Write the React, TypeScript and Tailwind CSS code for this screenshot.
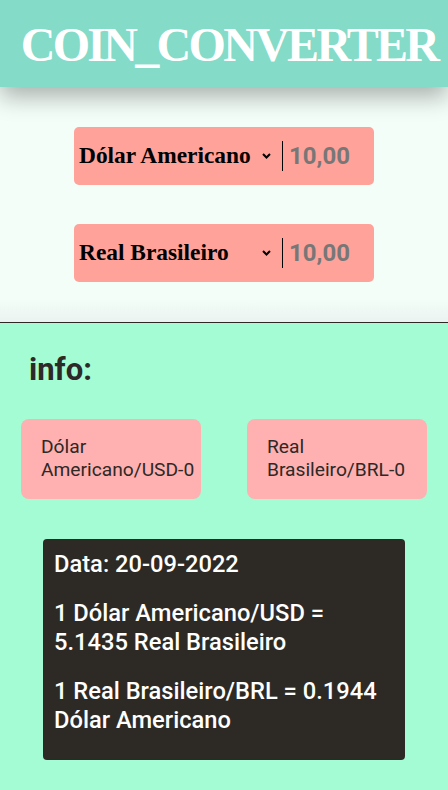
import { useState } from 'react';

type Coin = { name: string; code: string };

const coins: Coin[] = [
  { name: 'Dólar Americano', code: 'USD' },
  { name: 'Real Brasileiro', code: 'BRL' },
];

function Converter({ coin, value }: { coin: Coin; value: string }) {
  return (
    <div className="flex h-[58px] w-[300px] items-center rounded-[5px] bg-[#ffa29a] pl-[5px]">
      <div className="flex w-[198px] items-center justify-between font-['Liberation_Serif',serif] text-[23.4px] font-bold text-black">
        <span>{coin.name}</span>
        <svg width="9" height="6" viewBox="0 0 9 6" className="mr-[6px]">
          <polyline points="1,1 4.5,4.5 8,1" fill="none" stroke="black" strokeWidth="2" />
        </svg>
      </div>
      <div className="ml-[5px] h-[30px] border-l border-black" />
      <span className="ml-[6px] font-['Roboto',sans-serif] text-[24px] font-bold text-[#777777]">{value}</span>
    </div>
  );
}

export default function App() {
  const [value] = useState('10,00');

  return (
    <div className="min-h-screen bg-[#a4fcd5] font-['Roboto',sans-serif]">
      <header className="relative z-10 flex h-[87px] items-center justify-center bg-[#83dbc8] shadow-[0_10px_22px_rgba(0,0,0,0.3)]">
        <h1 className="pl-[10px] pt-[2px] font-['Liberation_Serif',serif] text-[48px] font-bold tracking-[-2.7px] text-white">
          COIN_CONVERTER
        </h1>
      </header>

      <section className="flex flex-col items-center gap-[39px] bg-gradient-to-b from-[#f4fef9] from-90% to-[#eaf3ef] py-10">
        {coins.map((coin) => (
          <Converter key={coin.code} coin={coin} value={value} />
        ))}
      </section>

      <section className="border-t border-[#2d2926] pb-8">
        <h2 className="mt-[29px] pl-[29px] text-[31px] font-bold leading-[36px] text-[#2d2926]">info:</h2>

        <div className="mt-[31px] flex justify-between px-[21px]">
          {coins.map((coin) => (
            <div
              key={coin.code}
              className="h-[80px] w-[180px] rounded-[8px] bg-[#ffb0b0] pl-5 pr-1 pt-4 text-[19.2px] leading-[23px] text-[#2d2926]"
            >
              {coin.name}/{coin.code}-0
            </div>
          ))}
        </div>

        <div className="mx-auto mt-10 w-[362px] rounded-[4px] bg-[#2d2a26] pb-[25px] pl-[11px] pr-2 pt-[11px] text-[23.7px] font-medium leading-[29px] text-white">
          <p>Data: 20-09-2022</p>
          <p className="mt-5">1 Dólar Americano/USD = 5.1435 Real Brasileiro</p>
          <p className="mt-5">1 Real Brasileiro/BRL = 0.1944 Dólar Americano</p>
        </div>
      </section>
    </div>
  );
}
